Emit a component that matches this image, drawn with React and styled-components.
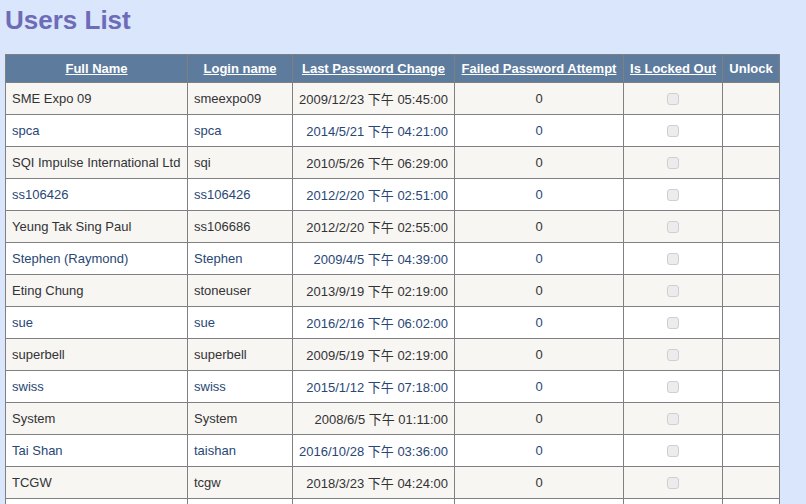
import React from 'react';
import styled, { createGlobalStyle } from 'styled-components';

const GlobalStyle = createGlobalStyle`
  html, body {
    margin: 0;
    background: #d9e6fc;
  }
`;

const Page = styled.div`
  padding: 5px;
  font-family: "Liberation Sans", Arial, "Noto Sans CJK TC", sans-serif;
`;

const Title = styled.h1`
  margin: 0 0 19px 0;
  font-size: 26px;
  line-height: 30px;
  font-weight: bold;
  color: #6e6bb7;
`;

const Grid = styled.table`
  border-collapse: collapse;
  border: 1px solid #808080;
  font-size: 13px;
  table-layout: fixed;
  width: 774px;
`;

const Head = styled.th`
  background: #5d7b9d;
  color: #fff;
  font-weight: bold;
  height: 27px;
  padding: 0;
  border: 1px solid #808080;
  text-align: center;
  vertical-align: middle;
  white-space: nowrap;
`;

const SortLink = styled.a`
  color: #fff;
  text-decoration: underline;
`;

const Row = styled.tr`
  background: ${({ alt }) => (alt ? '#ffffff' : '#f7f6f3')};
  color: ${({ alt }) => (alt ? '#284775' : '#333333')};
`;

const Cell = styled.td`
  height: 31px;
  padding: 0 6px;
  border: 1px solid #808080;
  text-align: ${({ align }) => align || 'left'};
  vertical-align: middle;
  white-space: nowrap;
  overflow: hidden;
`;

const LockBox = styled.input`
  appearance: none;
  display: block;
  margin: 0 auto;
  width: 12px;
  height: 12px;
  border: 1px solid #cfcfcf;
  border-radius: 3px;
  background: #ececec;
`;

const users = [
  ['SME Expo 09', 'smeexpo09', '2009/12/23', '05:45:00'],
  ['spca', 'spca', '2014/5/21', '04:21:00'],
  ['SQI Impulse International Ltd', 'sqi', '2010/5/26', '06:29:00'],
  ['ss106426', 'ss106426', '2012/2/20', '02:51:00'],
  ['Yeung Tak Sing Paul', 'ss106686', '2012/2/20', '02:55:00'],
  ['Stephen (Raymond)', 'Stephen', '2009/4/5', '04:39:00'],
  ['Eting Chung', 'stoneuser', '2013/9/19', '02:19:00'],
  ['sue', 'sue', '2016/2/16', '06:02:00'],
  ['superbell', 'superbell', '2009/5/19', '02:19:00'],
  ['swiss', 'swiss', '2015/1/12', '07:18:00'],
  ['System', 'System', '2008/6/5', '01:11:00'],
  ['Tai Shan', 'taishan', '2016/10/28', '03:36:00'],
  ['TCGW', 'tcgw', '2018/3/23', '04:24:00'],
];

const columns = [
  { title: 'Full Name', width: 182, link: true },
  { title: 'Login name', width: 105, link: true },
  { title: 'Last Password Change', width: 162, link: true },
  { title: 'Failed Password Attempt', width: 169, link: true },
  { title: 'Is Locked Out', width: 99, link: true },
  { title: 'Unlock', width: 57, link: false },
];

const App = () => {
  return (
    <Page>
      <GlobalStyle />
      <Title>Users List</Title>
      <Grid>
        <colgroup>
          {columns.map((col) => <col key={col.title} style={{ width: col.width }} />)}
        </colgroup>
        <thead>
          <tr>
            {columns.map((col) => (
              <Head key={col.title}>
                {col.link ? <SortLink href="#">{col.title}</SortLink> : col.title}
              </Head>
            ))}
          </tr>
        </thead>
        <tbody>
          {users.map(([name, login, date, time], i) => (
            <Row key={login} alt={i % 2 === 1}>
              <Cell>{name}</Cell>
              <Cell>{login}</Cell>
              <Cell align="right">{date} 下午 {time}</Cell>
              <Cell align="center">0</Cell>
              <Cell align="center"><LockBox type="checkbox" disabled /></Cell>
              <Cell />
            </Row>
          ))}
          {/* next row only peeks in below the fold */}
          <Row alt>
            {columns.map((col) => <Cell key={col.title} />)}
          </Row>
        </tbody>
      </Grid>
    </Page>
  );
}

export default App;
